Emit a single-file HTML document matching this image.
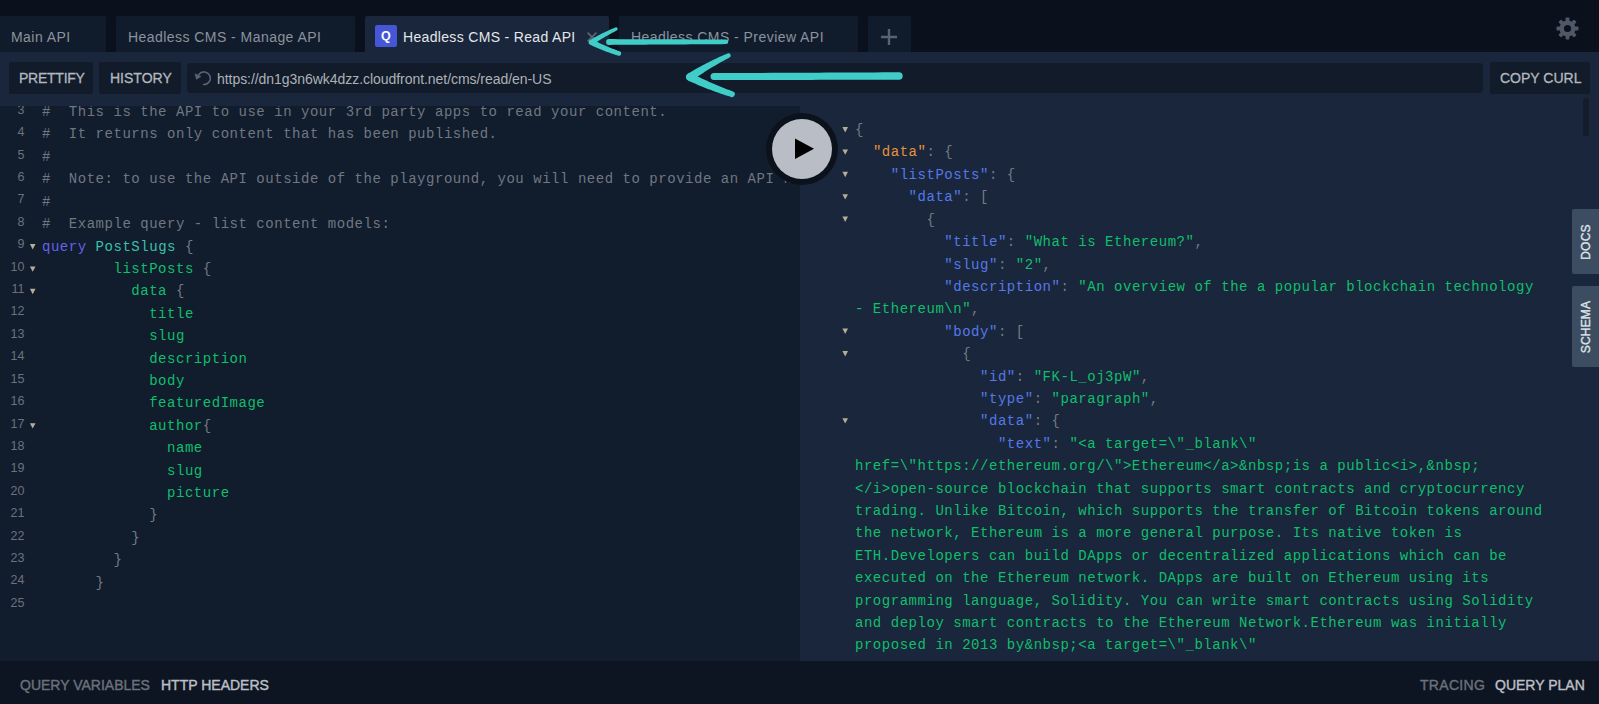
<!DOCTYPE html>
<html><head><meta charset="utf-8">
<style>
*{box-sizing:border-box;margin:0;padding:0}
html,body{width:1599px;height:704px;overflow:hidden;background:#0b111c;font-family:"Liberation Sans",sans-serif}
.abs{position:absolute}
.tab{position:absolute;top:16px;height:36px;background:#101c2c;border-radius:2px 2px 0 0}
.tab .t{position:absolute;top:13.4px;line-height:16px;font-size:14px;color:#8c929b;white-space:pre;letter-spacing:0.45px}
.tab.active{background:#19263b}
.tab.active .t{color:#e4e6e9}
.toolbar{position:absolute;left:0;top:52px;width:1599px;height:54px;background:#19263b}
.btn{position:absolute;top:62px;height:31.6px;padding-top:1px;background:#111b2a;border-radius:2px;color:#b3b8be;-webkit-text-stroke:0.3px #b3b8be;font-weight:400;font-size:14px;line-height:31px;white-space:pre}
.left{position:absolute;left:0;top:106px;width:800px;height:555px;background:#111c2d;overflow:hidden}
.right{position:absolute;left:800px;top:94px;width:799px;height:567px;background:#19263b;overflow:hidden}
.bottom{position:absolute;left:0;top:661px;width:1599px;height:43px;background:#0e1522}
.code{position:absolute;font-family:"Liberation Mono",monospace;font-size:14px;letter-spacing:0.53px;line-height:22.4px;white-space:pre}
.ln{position:absolute;left:0;width:24.5px;text-align:right;font-size:12.5px;color:#6b727c;line-height:22.4px}
.c{color:#707781}
.kw{color:#6262ea}
.df{color:#3cc0aa}
.pr{color:#10bf6b}
.pu{color:#737a84}
.k1{color:#e8923c}
.k2{color:#5579e8}
.st{color:#10bf6b}
.bt{top:677px;font-size:14px;font-weight:400;-webkit-text-stroke:0.4px currentColor;line-height:16px;white-space:pre}
.side{left:1572px;width:30px;background:#3c4d61;border-radius:2px}
.side span{position:absolute;left:calc(50% - 1.5px);top:50%;transform:translate(-50%,-50%) rotate(-90deg);font-size:12px;font-weight:400;-webkit-text-stroke:0.35px #dfe3e8;letter-spacing:0.2px;color:#dfe3e8;white-space:pre;line-height:14px}
.fold{position:absolute;width:0;height:0;border-left:2.8px solid transparent;border-right:2.8px solid transparent;border-top:5.6px solid #c2bca2}
</style></head><body>
<!-- tabs -->
<div class="tab" style="left:-4px;width:110px"><span class="t" style="left:15px">Main API</span></div>
<div class="tab" style="left:116px;width:239px"><span class="t" style="left:12px">Headless CMS - Manage API</span></div>
<div class="tab active" style="left:365px;width:244px">
  <div class="abs" style="left:10px;top:9px;width:22px;height:22px;background:#4557d6;border-radius:2px;color:#fff;font-weight:700;font-size:12.5px;line-height:22px;text-align:center;text-indent:-0.5px">Q</div>
  <span class="t" style="left:38px;letter-spacing:0.33px">Headless CMS - Read API</span>
</div>
<div class="tab" style="left:619px;width:239px"><span class="t" style="left:12px">Headless CMS - Preview API</span></div>
<div class="tab" style="left:868px;width:43px"></div>

<div class="toolbar"></div>
<div class="btn" style="left:9px;width:84px;padding-left:10px;letter-spacing:-0.25px">PRETTIFY</div>
<div class="btn" style="left:99px;width:82px;padding-left:11px">HISTORY</div>
<div class="abs" style="left:187px;top:63px;width:1296px;height:30px;background:#111b2a;border-radius:4px"></div>
<div class="abs" style="left:217px;top:63.5px;line-height:30px;font-size:14px;color:#adb1b7;white-space:pre;letter-spacing:-0.05px">https://dn1g3n6wk4dzz.cloudfront.net/cms/read/en-US</div>
<div class="btn" style="left:1490px;width:100px;padding-left:10px;letter-spacing:0px">COPY CURL</div>

<div class="left">
<div class="ln" style="top:-7.2px">3<br>4<br>5<br>6<br>7<br>8<br>9<br>10<br>11<br>12<br>13<br>14<br>15<br>16<br>17<br>18<br>19<br>20<br>21<br>22<br>23<br>24<br>25</div>
<div class="code" style="left:42px;top:-4.93px"><span class="c">#  This is the API to use in your 3rd party apps to read your content.</span>
<span class="c">#  It returns only content that has been published.</span>
<span class="c">#</span>
<span class="c">#  Note: to use the API outside of the playground, you will need to provide an API key.</span>
<span class="c">#</span>
<span class="c">#  Example query - list content models:</span>
<span class="kw">query</span> <span class="df">PostSlugs</span> <span class="pu">{</span>
        <span class="pr">listPosts</span> <span class="pu">{</span>
          <span class="pr">data</span> <span class="pu">{</span>
            <span class="pr">title</span>
            <span class="pr">slug</span>
            <span class="pr">description</span>
            <span class="pr">body</span>
            <span class="pr">featuredImage</span>
            <span class="pr">author</span><span class="pu">{</span>
              <span class="pr">name</span>
              <span class="pr">slug</span>
              <span class="pr">picture</span>
            <span class="pu">}</span>
          <span class="pu">}</span>
        <span class="pu">}</span>
      <span class="pu">}</span>
</div>
</div>
<div class="right">
<div class="code" style="left:55px;top:25.07px"><span class="pu">{</span>
  <span class="k1">&quot;data&quot;</span><span class="pu">: {</span>
    <span class="k2">&quot;listPosts&quot;</span><span class="pu">: {</span>
      <span class="k2">&quot;data&quot;</span><span class="pu">: [</span>
        <span class="pu">{</span>
          <span class="k2">&quot;title&quot;</span><span class="pu">: </span><span class="st">&quot;What is Ethereum?&quot;</span><span class="pu">,</span>
          <span class="k2">&quot;slug&quot;</span><span class="pu">: </span><span class="st">&quot;2&quot;</span><span class="pu">,</span>
          <span class="k2">&quot;description&quot;</span><span class="pu">: </span><span class="st">&quot;An overview of the a popular blockchain technology </span>
<span class="st">- Ethereum\n&quot;</span><span class="pu">,</span>
          <span class="k2">&quot;body&quot;</span><span class="pu">: [</span>
            <span class="pu">{</span>
              <span class="k2">&quot;id&quot;</span><span class="pu">: </span><span class="st">&quot;FK-L_oj3pW&quot;</span><span class="pu">,</span>
              <span class="k2">&quot;type&quot;</span><span class="pu">: </span><span class="st">&quot;paragraph&quot;</span><span class="pu">,</span>
              <span class="k2">&quot;data&quot;</span><span class="pu">: {</span>
                <span class="k2">&quot;text&quot;</span><span class="pu">: </span><span class="st">&quot;&lt;a target=\&quot;_blank\&quot; </span>
<span class="st">href=\&quot;https://ethereum.org/\&quot;&gt;Ethereum&lt;/a&gt;&amp;nbsp;is a public&lt;i&gt;,&amp;nbsp;</span>
<span class="st">&lt;/i&gt;open-source blockchain that supports smart contracts and cryptocurrency </span>
<span class="st">trading. Unlike Bitcoin, which supports the transfer of Bitcoin tokens around </span>
<span class="st">the network, Ethereum is a more general purpose. Its native token is </span>
<span class="st">ETH.Developers can build DApps or decentralized applications which can be </span>
<span class="st">executed on the Ethereum network. DApps are built on Ethereum using its </span>
<span class="st">programming language, Solidity. You can write smart contracts using Solidity </span>
<span class="st">and deploy smart contracts to the Ethereum Network.Ethereum was initially </span>
<span class="st">proposed in 2013 by&amp;nbsp;&lt;a target=\&quot;_blank\&quot;</span></div>
</div>
<div class="bottom"></div>
<div class="abs bt" style="left:20px;color:#6a717b;letter-spacing:0px">QUERY VARIABLES</div>
<div class="abs bt" style="left:161px;color:#bcc0c6;letter-spacing:0px">HTTP HEADERS</div>
<div class="abs bt" style="left:1420px;color:#6a717b;letter-spacing:0.3px">TRACING</div>
<div class="abs bt" style="left:1495px;color:#bcc0c6">QUERY PLAN</div>

<!-- fold markers -->
<svg class="abs" style="left:0;top:0" width="1599" height="704"><g fill="#b5af97"><path d="M29.90 244.00H35.50L32.70 249.40Z"/><path d="M29.90 266.40H35.50L32.70 271.80Z"/><path d="M29.90 288.80H35.50L32.70 294.20Z"/><path d="M29.90 423.20H35.50L32.70 428.60Z"/><path d="M842.40 127.00H848.00L845.20 132.40Z"/><path d="M842.40 149.40H848.00L845.20 154.80Z"/><path d="M842.40 171.80H848.00L845.20 177.20Z"/><path d="M842.40 194.20H848.00L845.20 199.60Z"/><path d="M842.40 216.60H848.00L845.20 222.00Z"/><path d="M842.40 328.60H848.00L845.20 334.00Z"/><path d="M842.40 351.00H848.00L845.20 356.40Z"/><path d="M842.40 418.20H848.00L845.20 423.60Z"/></g></svg>

<!-- play button -->
<div class="abs" style="left:766px;top:112.7px;width:72px;height:72px;border-radius:50%;background:#0c121c"></div>
<div class="abs" style="left:772px;top:118.7px;width:60px;height:60px;border-radius:50%;background:#b9bec6"></div>
<svg class="abs" style="left:0;top:0" width="1599" height="704">
  <path d="M795 138.5 L814 148.7 L795 159 Z" fill="#000"/>
</svg>

<!-- scrollbar -->
<div class="abs" style="left:1582.8px;top:98px;width:6.4px;height:38px;border-radius:3.2px;background:#151d2d"></div>

<!-- docs / schema -->
<div class="abs side" style="top:209px;height:65px"><span>DOCS</span></div>
<div class="abs side" style="top:286px;height:81px"><span>SCHEMA</span></div>

<!-- gear -->
<svg class="abs" style="left:1556px;top:17px" width="23" height="23" viewBox="0 0 23 23">
  <g fill="#4f5867" transform="translate(11.5 11.5)">
    <rect x="-1.9" y="-11" width="3.8" height="22" rx="0.8"/>
    <rect x="-1.9" y="-11" width="3.8" height="22" rx="0.8" transform="rotate(45)"/>
    <rect x="-1.9" y="-11" width="3.8" height="22" rx="0.8" transform="rotate(90)"/>
    <rect x="-1.9" y="-11" width="3.8" height="22" rx="0.8" transform="rotate(135)"/>
    <circle r="8"/>
  </g>
  <circle cx="11.5" cy="11.5" r="3.6" fill="#0b111c"/>
</svg>

<!-- plus -->
<svg class="abs" style="left:881px;top:29px" width="16" height="16"><path d="M8 0V16M0 8H16" stroke="#5a6270" stroke-width="2.4"/></svg>
<!-- close x -->
<svg class="abs" style="left:587px;top:31.5px" width="10" height="10"><path d="M0.6 0.6L9.4 9.4M9.4 0.6L0.6 9.4" stroke="#5d6572" stroke-width="1.6"/></svg>
<!-- reload -->
<svg class="abs" style="left:0;top:0" width="1599" height="704">
  <path d="M198.9 74.5 A6.3 6.3 0 1 1 203.6 84.5" fill="none" stroke="#5a6371" stroke-width="1.6" stroke-linecap="round"/>
  <path d="M194.8 73.6 L201.2 76.4 L196.4 79.6 Z" fill="#5a6371" stroke="#5a6371" stroke-width="0.3" stroke-linejoin="round"/>
</svg>

<!-- teal arrows -->
<svg class="abs" style="left:0;top:0" width="1599" height="704"><g fill="#40cdc8"><path d="M609.00 44.90 L614.09 44.87 L619.18 44.83 L624.27 44.80 L629.35 44.76 L634.44 44.73 L639.53 44.69 L644.61 44.66 L649.70 44.62 L654.79 44.59 L659.87 44.55 L664.96 44.52 L670.05 44.48 L675.13 44.45 L680.22 44.41 L685.31 44.38 L690.40 44.34 L695.48 44.31 L700.57 44.27 L705.66 44.24 L710.74 44.20 L715.83 44.17 L720.92 44.13 L726.00 44.10 A2.30 2.30 0 0 0 726.00 39.50 L726.00 39.50 L720.91 39.48 L715.82 39.47 L710.74 39.45 L705.65 39.43 L700.56 39.41 L695.47 39.40 L690.39 39.38 L685.30 39.36 L680.21 39.34 L675.13 39.33 L670.04 39.31 L664.95 39.29 L659.87 39.27 L654.78 39.26 L649.69 39.24 L644.60 39.22 L639.52 39.20 L634.43 39.19 L629.34 39.17 L624.26 39.15 L619.17 39.13 L614.08 39.12 L609.00 39.10 A2.90 2.90 0 0 0 609.00 44.90 Z"/><path d="M592.95 44.57 L593.94 43.90 L594.94 43.22 L595.93 42.56 L596.93 41.90 L597.94 41.24 L598.94 40.59 L599.96 39.95 L600.97 39.32 L601.99 38.69 L603.02 38.07 L604.05 37.45 L605.08 36.84 L606.11 36.24 L607.15 35.64 L608.20 35.05 L609.25 34.46 L610.30 33.89 L611.36 33.31 L612.42 32.75 L613.48 32.19 L614.55 31.64 L615.62 31.09 L616.70 30.55 A1.70 1.70 0 0 0 615.30 27.45 L615.30 27.45 L614.17 27.92 L613.04 28.40 L611.91 28.88 L610.79 29.37 L609.67 29.87 L608.55 30.38 L607.44 30.89 L606.32 31.41 L605.22 31.93 L604.11 32.47 L603.01 33.00 L601.91 33.55 L600.82 34.10 L599.73 34.67 L598.64 35.23 L597.55 35.81 L596.47 36.39 L595.39 36.98 L594.32 37.57 L593.24 38.18 L592.17 38.79 L591.11 39.40 L590.05 40.03 A2.70 2.70 0 0 0 592.95 44.57 Z"/><path d="M590.27 44.82 L591.46 45.37 L592.65 45.91 L593.85 46.45 L595.04 46.98 L596.24 47.50 L597.44 48.02 L598.65 48.53 L599.85 49.03 L601.06 49.52 L602.28 50.01 L603.49 50.49 L604.71 50.96 L605.93 51.43 L607.15 51.88 L608.38 52.33 L609.61 52.78 L610.84 53.21 L612.07 53.64 L613.31 54.07 L614.55 54.48 L615.79 54.89 L617.03 55.29 L618.28 55.68 A2.30 2.30 0 0 0 619.72 51.32 L619.72 51.32 L618.52 50.89 L617.31 50.46 L616.11 50.02 L614.91 49.57 L613.72 49.12 L612.52 48.66 L611.34 48.19 L610.15 47.71 L608.97 47.23 L607.79 46.75 L606.61 46.25 L605.44 45.75 L604.27 45.24 L603.10 44.73 L601.93 44.20 L600.77 43.68 L599.61 43.14 L598.46 42.60 L597.31 42.05 L596.16 41.49 L595.01 40.93 L593.87 40.36 L592.73 39.78 A2.80 2.80 0 0 0 590.27 44.82 Z"/><path d="M714.01 80.10 L722.05 80.08 L730.10 80.07 L738.14 80.05 L746.19 80.03 L754.23 80.01 L762.27 80.00 L770.32 79.98 L778.36 79.96 L786.40 79.94 L794.45 79.93 L802.49 79.91 L810.53 79.89 L818.58 79.87 L826.62 79.86 L834.66 79.84 L842.71 79.82 L850.75 79.80 L858.79 79.79 L866.84 79.77 L874.88 79.75 L882.92 79.73 L890.97 79.72 L899.01 79.70 A3.70 3.70 0 0 0 898.99 72.30 L898.99 72.30 L890.94 72.33 L882.90 72.37 L874.86 72.40 L866.81 72.44 L858.77 72.47 L850.73 72.51 L842.68 72.54 L834.64 72.58 L826.60 72.61 L818.55 72.65 L810.51 72.68 L802.47 72.72 L794.42 72.75 L786.38 72.79 L778.34 72.82 L770.29 72.86 L762.25 72.89 L754.21 72.93 L746.16 72.96 L738.12 73.00 L730.08 73.03 L722.03 73.07 L713.99 73.10 A3.50 3.50 0 0 0 714.01 80.10 Z"/><path d="M692.18 80.35 L693.74 79.26 L695.30 78.18 L696.86 77.10 L698.43 76.04 L700.01 74.98 L701.60 73.93 L703.19 72.90 L704.78 71.87 L706.39 70.85 L707.99 69.84 L709.61 68.84 L711.23 67.85 L712.86 66.87 L714.49 65.90 L716.13 64.94 L717.78 63.98 L719.43 63.04 L721.09 62.11 L722.76 61.18 L724.43 60.27 L726.11 59.36 L727.79 58.47 L729.48 57.58 A2.30 2.30 0 0 0 727.52 53.42 L727.52 53.42 L725.74 54.19 L723.96 54.96 L722.19 55.75 L720.43 56.54 L718.67 57.35 L716.92 58.17 L715.17 58.99 L713.42 59.83 L711.68 60.68 L709.94 61.54 L708.21 62.41 L706.49 63.29 L704.76 64.18 L703.05 65.08 L701.34 65.99 L699.63 66.91 L697.93 67.84 L696.23 68.78 L694.54 69.73 L692.85 70.70 L691.17 71.67 L689.49 72.65 L687.82 73.65 A4.00 4.00 0 0 0 692.18 80.35 Z"/><path d="M688.24 80.59 L690.06 81.42 L691.89 82.24 L693.72 83.05 L695.55 83.85 L697.38 84.64 L699.22 85.41 L701.07 86.18 L702.91 86.93 L704.76 87.68 L706.62 88.41 L708.48 89.13 L710.34 89.84 L712.21 90.54 L714.08 91.23 L715.95 91.91 L717.83 92.58 L719.71 93.23 L721.60 93.88 L723.49 94.52 L725.38 95.14 L727.28 95.75 L729.18 96.36 L731.08 96.95 A2.90 2.90 0 0 0 732.92 91.45 L732.92 91.45 L731.08 90.78 L729.24 90.09 L727.41 89.40 L725.58 88.70 L723.76 87.99 L721.94 87.26 L720.12 86.53 L718.32 85.79 L716.51 85.03 L714.71 84.27 L712.92 83.49 L711.13 82.71 L709.34 81.91 L707.56 81.11 L705.79 80.29 L704.02 79.47 L702.25 78.63 L700.49 77.79 L698.73 76.93 L696.98 76.07 L695.24 75.19 L693.49 74.30 L691.76 73.41 A4.00 4.00 0 0 0 688.24 80.59 Z"/></g></svg>

</body></html>
